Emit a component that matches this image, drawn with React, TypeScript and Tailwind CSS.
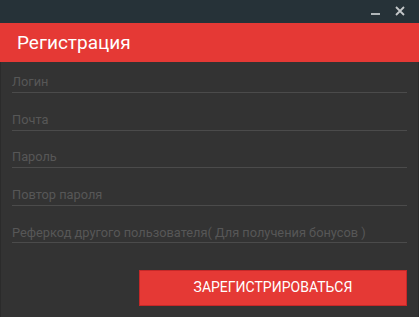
const fields = ['Логин', 'Почта', 'Пароль', 'Повтор пароля', 'Реферкод другого пользователя( Для получения бонусов )'];

export default function App() {
  return (
    <div className="w-[419px] h-[317px] flex flex-col bg-[#333333] font-['Roboto','Liberation_Sans',sans-serif]">
      {/* Window bar */}
      <div className="h-[23px] bg-[#263238] flex items-center justify-end gap-[15px] pr-[14px]">
        <div className="w-[9px] h-[2px] bg-[#b0b6b9] mt-[5px]" />
        <svg width="10" height="10" viewBox="0 0 10 10" className="mt-[-1px]">
          <path d="M1 1L9 9M9 1L1 9" stroke="#c4c8ca" strokeWidth="1.8" />
        </svg>
      </div>

      {/* Header */}
      <div className="h-[39px] bg-[#e53935] flex items-center pl-[17px]">
        <h1 className="text-white text-[19px] leading-none">Регистрация</h1>
      </div>

      {/* Form */}
      <div className="flex-1 border-x border-[#2b2b2b] px-[11px] pt-[12px]">
        {fields.map((f) => (
          <div key={f} className="h-[37.6px]">
            <div className="h-[19px] border-b border-[#4b4b4b] flex items-end pb-[3px]">
              <span className="text-[12.8px] leading-none text-[#575757]">{f}</span>
            </div>
          </div>
        ))}
        <div className="flex justify-end mt-[8px]">
          <button className="w-[268px] h-[36px] bg-[#e53935] border border-[#c62828] text-white text-[14px]">
            ЗАРЕГИСТРИРОВАТЬСЯ
          </button>
        </div>
      </div>
    </div>
  );
}
